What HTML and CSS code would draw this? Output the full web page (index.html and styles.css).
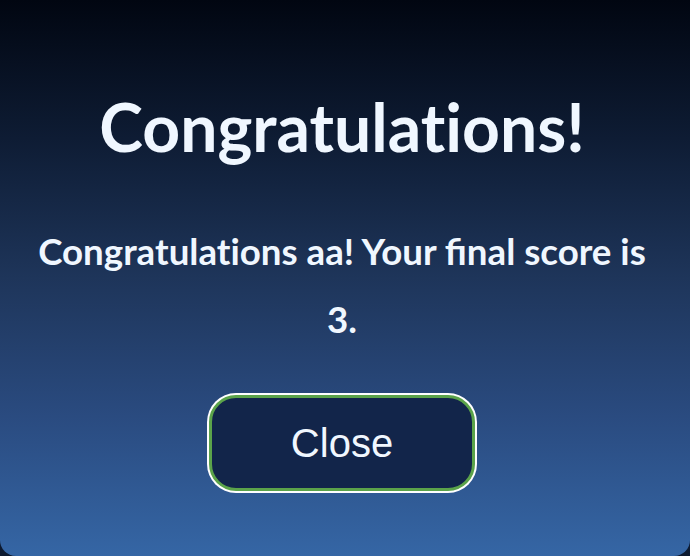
FILE: index.html
```html
<!DOCTYPE html>
<html>
<head>
<meta charset="utf-8">
<link rel="stylesheet" href="styles.css">
</head>
<body>
<div class="modal">
  <h1 class="title">Congratulations!</h1>
  <p class="message"><span class="nolig">Congratulations</span> aa! Your final score is 3.</p>
  <button class="close-btn">Close</button>
</div>
</body>
</html>
```
FILE: styles.css
```css
html, body {
  margin: 0;
  padding: 0;
  height: 100%;
  background: #0d1a30;
}
body {
  overflow: hidden;
}
.modal {
  box-sizing: border-box;
  height: 556px;
  border-radius: 0 0 16px 16px;
  background: linear-gradient(180deg, #010611 0%, #0e1c34 25%, #1e355a 50%, #2a4b80 75%, #3566a5 100%);
  display: flex;
  flex-direction: column;
  align-items: center;
  padding: 87px 33px 0 27px;
  font-family: Lato, "Noto Sans", sans-serif;
  color: #f0f7ff;
  text-align: center;
}
.title {
  margin: 0;
  font-size: 66px;
  font-weight: 700;
  line-height: 1.2;
  font-variant-ligatures: none;
}
.message {
  margin: 51px 0 0;
  font-size: 36.7px;
  font-weight: 700;
  line-height: 68px;
  max-width: 630px;
}
.nolig {
  font-variant-ligatures: none;
}
.close-btn {
  margin-top: 42px;
  width: 266px;
  height: 96px;
  box-sizing: border-box;
  border-radius: 27px;
  border: 3px solid #5ba34a;
  box-shadow: 0 0 0 2px #ffffff;
  background: #12254a;
  color: #f0f7ff;
  font-family: "Liberation Sans", Arial, sans-serif;
  font-size: 40px;
  cursor: pointer;
}
```
